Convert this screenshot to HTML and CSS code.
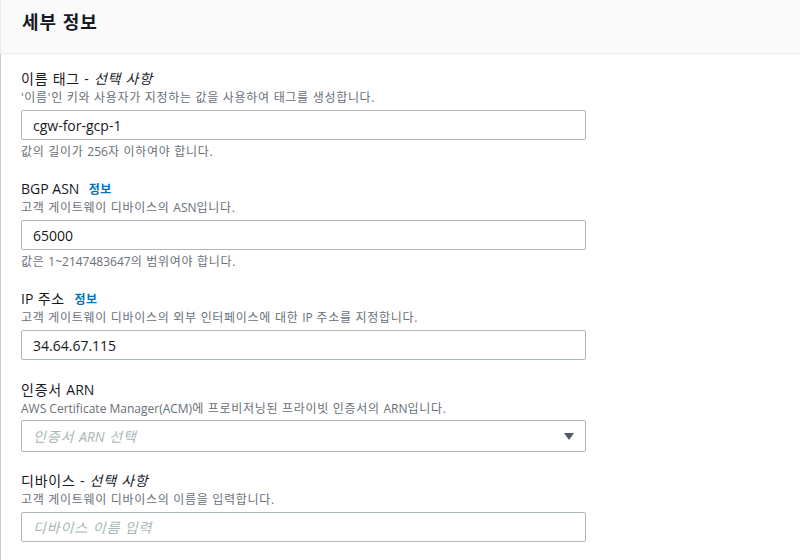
FILE: index.html
```html
<!DOCTYPE html>
<html lang="ko">
<head>
<meta charset="utf-8">
<link rel="stylesheet" href="styles.css">
</head>
<body>
<div class="panel">
  <div class="header"><h2>세부 정보</h2></div>
  <div class="body">
    <div class="field">
      <div class="label">이름 태그 - <i>선택 사항</i></div>
      <div class="desc">'이름'인 키와 사용자가 지정하는 값을 사용하여 태그를 생성합니다.</div>
      <div class="input">cgw-for-gcp-1</div>
      <div class="hint">값의 길이가 <span class="en">256</span>자 이하여야 합니다.</div>
    </div>
    <div class="field">
      <div class="label"><span class="en">BGP ASN</span> <a class="info">정보</a></div>
      <div class="desc">고객 게이트웨이 디바이스의 <span class="en">ASN</span>입니다.</div>
      <div class="input">65000</div>
      <div class="hint">값은 <span class="en">1~2147483647</span>의 범위여야 합니다.</div>
    </div>
    <div class="field">
      <div class="label"><span class="en">IP</span> 주소 <a class="info">정보</a></div>
      <div class="desc">고객 게이트웨이 디바이스의 외부 인터페이스에 대한 <span class="en">IP</span> 주소를 지정합니다.</div>
      <div class="input">34.64.67.115</div>
    </div>
    <div class="field sel">
      <div class="label">인증서 <span class="en">ARN</span></div>
      <div class="desc"><span class="en">AWS Certificate Manager(ACM)</span>에 프로비저닝된 프라이빗 인증서의 <span class="en">ARN</span>입니다.</div>
      <div class="input select"><span class="ph">인증서 <span class="en">ARN</span> 선택</span><span class="caret"></span></div>
    </div>
    <div class="field">
      <div class="label">디바이스 - <i>선택 사항</i></div>
      <div class="desc">고객 게이트웨이 디바이스의 이름을 입력합니다.</div>
      <div class="input"><span class="ph">디바이스 이름 입력</span></div>
    </div>
  </div>
</div>
</body>
</html>
```

FILE: styles.css
```css
html, body {
  margin: 0;
  padding: 0;
  background: #ffffff;
  font-family: "Open Sans", "Noto Sans CJK KR", sans-serif;
  color: #16191f;
}
.panel {
  width: 800px;
  height: 560px;
  overflow: hidden;
}
.header {
  background: #fafafa;
  border-bottom: 1px solid #eaeded;
  border-left: 1px solid #eaeded;
  box-sizing: border-box;
  height: 54px;
  padding-left: 21px;
  display: flex;
  align-items: center;
}
.header h2 {
  margin: 0 0 9px 0;
  font-size: 18px;
  font-weight: 700;
  line-height: 24px;
  letter-spacing: 1px;
  color: #16191f;
}
.body {
  border-left: 1px solid #c5cccd;
  padding: 13px 20px 0 20px;
  height: 506px;
  display: flex;
  flex-direction: column;
  gap: 18px;
}
.field {
  display: flex;
  flex-direction: column;
}
.field.sel {
  margin-bottom: -1px;
}
.label {
  font-size: 14px;
  line-height: 21px;
  height: 21px;
  padding-top: 1px;
  letter-spacing: 0.75px;
  color: #16191f;
  white-space: nowrap;
}
.label i {
  font-style: italic;
}
.en {
  letter-spacing: 0;
}
.info {
  color: #0073bb;
  font-weight: 700;
  font-size: 12px;
  line-height: 1;
  margin-left: 5px;
  letter-spacing: 0.5px;
}
.desc {
  font-size: 12px;
  line-height: 15px;
  height: 15px;
  padding-top: 1px;
  letter-spacing: 0.7px;
  color: #687078;
  white-space: nowrap;
}
.input {
  margin-top: 5px;
  width: 565px;
  height: 30px;
  box-sizing: border-box;
  border: 1px solid #aab7b8;
  border-radius: 2px;
  padding: 0 11px;
  font-size: 14px;
  display: flex;
  align-items: center;
  color: #16191f;
}
.select {
  height: 32px;
  justify-content: space-between;
  margin-top: 4px;
}
.ph {
  color: #aab7b8;
  font-style: italic;
  letter-spacing: 0.9px;
}
.caret {
  width: 0;
  height: 0;
  border-left: 5px solid transparent;
  border-right: 5px solid transparent;
  border-top: 7px solid #545b64;
}
.hint {
  margin-top: 3px;
  font-size: 12px;
  line-height: 15px;
  height: 15px;
  padding-top: 1px;
  letter-spacing: 0.7px;
  color: #687078;
  white-space: nowrap;
}
```
